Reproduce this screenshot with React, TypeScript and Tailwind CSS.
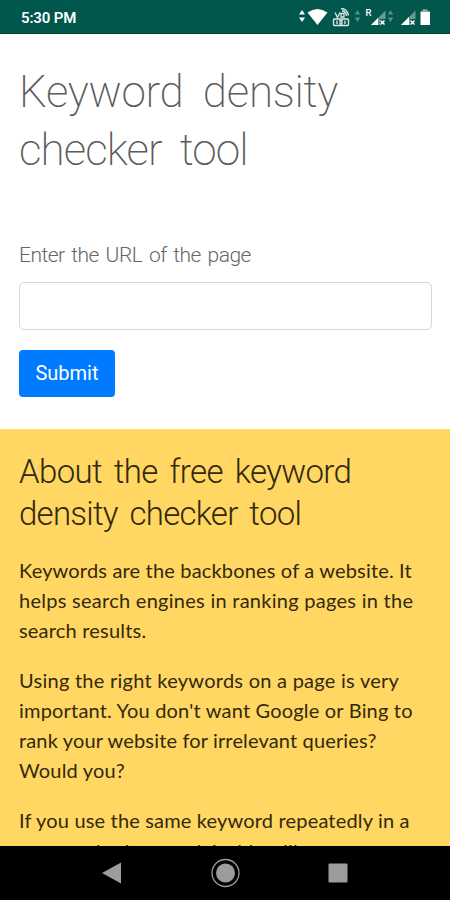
import React from 'react';

interface LineProps {
  children: React.ReactNode;
  className?: string;
}

const Line: React.FC<LineProps> = ({ children, className = '' }) => (
  <span className={`block whitespace-nowrap ${className}`}>{children}</span>
);

const StatusIcons: React.FC = () => (
  <svg width="134" height="22" viewBox="298 7 134 22" fill="white">
    {/* data arrows + wifi */}
    <path d="M302 10l3 4.500h-6zM302 22l-3-4.500h6z" />
    <path d="M307.500 12.500Q317.500 5.500 327.500 12.500L317.500 25z" />
    {/* vowifi */}
    <g fill="none" stroke="#dfe9e7" strokeWidth="1.300">
      <path d="M335 12.500l2.500 5 2.500-5M341 13.500h3v3.500h-3zM341 8.500q6 0 7.500 7M342 11q4 0 4.500 5" />
      <rect x="333.500" y="19" width="15" height="6.500" rx="1" />
      <path d="M337 20.500v3.500M340 20.500v3.500h2v-3.500zM345 20.500v3.500" />
    </g>
    {/* sim 1 */}
    <path d="M357.500 10l2.700 4.500h-5.400zM357.500 22l-2.700-4.500h5.400z" fillOpacity=".35" />
    <text x="365.500" y="16" fontSize="9.500" fontWeight="500" fontFamily="Roboto, sans-serif">R</text>
    <path d="M371 25l14.500-14.500V19H380v6z" fillOpacity=".4" />
    <path d="M371 25l7-7v7z" />
    <path d="M380.500 20.500l4 4M384.500 20.500l-4 4" stroke="white" strokeWidth="1.500" />
    <path d="M390.500 10l2.700 4.500h-5.400zM390.500 22l-2.700-4.500h5.400z" fillOpacity=".35" />
    {/* sim 2 */}
    <path d="M401 25l14.500-14.500V19H410v6z" fillOpacity=".4" />
    <path d="M401 25l8-8v8z" />
    <path d="M410.500 20.500l4 4M414.500 20.500l-4 4" stroke="white" strokeWidth="1.500" />
    {/* battery */}
    <path d="M422.500 9.500h5V11h-5z" fillOpacity=".6" />
    <rect x="420.500" y="11.500" width="9.500" height="13.500" rx=".5" />
  </svg>
);

const StatusBar: React.FC = () => (
  <header className="flex h-[34px] shrink-0 items-start justify-between border-b border-[#063d27] bg-[#01574b] pl-[21px] pr-[18px] text-white">
    <span className="pt-2 text-[15px] leading-5 font-semibold tracking-[-0.15px]">5:30 PM</span>
    <div className="pt-[7px]"><StatusIcons /></div>
  </header>
);

const NavBar: React.FC = () => (
  <nav className="h-[54px] shrink-0 bg-black">
    <svg width="450" height="54" viewBox="0 846 450 54" fill="#9c9c9c">
      <path d="M102 873l19-10.500v21z" />
      <circle cx="225.500" cy="873" r="9.500" />
      <circle cx="225.500" cy="873" r="13.500" fill="none" stroke="#9c9c9c" strokeWidth="1.300" />
      <rect x="328.500" y="863.500" width="19" height="19" rx="1" />
    </svg>
  </nav>
);

const App: React.FC = () => (
  <div className="flex h-[900px] w-[450px] flex-col overflow-hidden bg-white font-['Roboto',sans-serif]">
    <StatusBar />
    <main className="flex min-h-0 flex-1 flex-col overflow-hidden">
      <section className="h-[395px] shrink-0 px-[19px] pt-[29px]">
        <h1 className="text-[44px] leading-[58px] font-extralight text-[#5c5c5c]">
          <Line className="tracking-[-0.3px] [word-spacing:9px]">Keyword density</Line>
          <Line className="tracking-[-0.9px] [word-spacing:8px]">checker tool</Line>
        </h1>
        <label htmlFor="url" className="mt-[61px] block text-[21px] leading-[30px] font-light text-[#666]">
          <Line className="tracking-[-0.5px] [word-spacing:2px]">Enter the URL of the page</Line>
        </label>
        <input id="url" type="text" className="mt-3 block h-[48px] w-[413px] rounded-[5px] border border-[#d5d8d8]" />
        <button type="button" className="mt-5 block h-[47px] w-[96px] rounded-[4px] bg-[#007bff] pb-px text-[20px] text-white">
          Submit
        </button>
      </section>
      <section className="flex-1 overflow-hidden bg-[#ffd762] px-[19px] pt-[22px] text-[#33290f]">
        <h2 className="text-[33px] leading-[42px] font-light text-[#33290f]">
          <Line className="tracking-[-0.65px] [word-spacing:4.500px]">About the free keyword</Line>
          <Line className="tracking-[-0.75px] [word-spacing:4.500px]">density checker tool</Line>
        </h2>
        <div className="mt-[20px] space-y-5 font-['Lato',sans-serif] text-[20px] leading-[30px]">
          <p>
            <Line className="tracking-[0.17px]">Keywords are the backbones of a website. It</Line>
            <Line className="tracking-[0.27px]">helps search engines in ranking pages in the</Line>
            <Line className="tracking-[0.2px]">search results.</Line>
          </p>
          <p>
            <Line className="tracking-[0.26px]">Using the right keywords on a page is very</Line>
            <Line className="tracking-[0.19px]">important. You don't want Google or Bing to</Line>
            <Line className="tracking-[0.15px]">rank your website for irrelevant queries?</Line>
            <Line className="tracking-[0.2px]">Would you?</Line>
          </p>
          <p>
            <Line className="tracking-[0.17px]">If you use the same keyword repeatedly in a</Line>
            <Line className="pt-px tracking-[0.17px]">manner, in the next h1, this will</Line>
          </p>
        </div>
      </section>
    </main>
    <NavBar />
  </div>
);

export default App;
